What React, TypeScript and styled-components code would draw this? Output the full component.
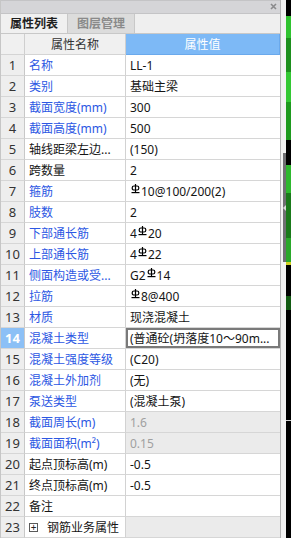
import React from 'react';
import styled, { createGlobalStyle } from 'styled-components';

const GlobalStyle = createGlobalStyle`
    html, body {
        margin: 0;
        padding: 0;
        background: #000;
    }
    body {
        font-family: "Noto Sans", "Noto Sans CJK SC", sans-serif;
    }
`;

const Screen = styled.div`
    display: flex;
    width: 291px;
    height: 538px;
    overflow: hidden;
    background: #000;
`;

const Panel = styled.div`
    display: flex;
    flex-direction: column;
    width: 280px;
    height: 100%;
    background: #f0f0f0;
    border-left: 1px solid #c6c6c6;
    box-sizing: border-box;
    overflow: hidden;
`;

const TitleBar = styled.div`
    display: flex;
    align-items: center;
    justify-content: flex-end;
    height: 15px;
    padding-right: 3px;
    background: #d5d5d8;
    border-top: 1px solid #c4c4c6;
    border-bottom: 1px solid #c4c4c6;
    box-sizing: border-box;
`;

const TabBar = styled.div`
    display: flex;
    height: 23px;
    background: #efefef;
    border-bottom: 1px solid #c8c8c8;
    box-sizing: border-box;
`;

const Tab = styled.div<{ $active?: boolean }>`
    display: flex;
    align-items: center;
    justify-content: center;
    width: 66px;
    font-size: 12px;
    font-weight: bold;
    color: ${(p) => (p.$active ? '#1e1e1e' : '#8a8a8a')};
    background: ${(p) => (p.$active ? '#f0f0f0' : '#dcdcdc')};
    border-right: 1px solid #c8c8c8;
`;

const Grid = styled.div`
    display: grid;
    grid-template-columns: 24px 101px 154px;
    grid-auto-rows: 21px;
`;

const HeadCell = styled.div<{ $accent?: boolean }>`
    display: flex;
    align-items: center;
    justify-content: center;
    font-size: 12px;
    color: ${(p) => (p.$accent ? '#ffffff' : '#333333')};
    background: ${(p) => (p.$accent ? '#7db9f6' : '#f0f0f0')};
    border-right: 1px solid ${(p) => (p.$accent ? '#6aa9ec' : '#cfcfcf')};
    border-bottom: 1px solid ${(p) => (p.$accent ? '#6aa9ec' : '#d4d4d4')};
    box-sizing: border-box;
`;

const NumCell = styled.div<{ $active?: boolean }>`
    display: flex;
    align-items: center;
    justify-content: center;
    font-size: 13px;
    font-weight: ${(p) => (p.$active ? 'bold' : 'normal')};
    color: ${(p) => (p.$active ? '#ffffff' : '#333333')};
    background: ${(p) => (p.$active ? '#8cc0f6' : '#eeeeee')};
    border-right: 1px solid #c8c8c8;
    border-bottom: 1px solid #d6d6d6;
    box-sizing: border-box;
`;

const NameCell = styled.div<{ $blue?: boolean }>`
    display: flex;
    align-items: center;
    gap: 9px;
    padding-left: 4px;
    font-size: 12px;
    white-space: nowrap;
    overflow: hidden;
    color: ${(p) => (p.$blue ? '#2c57e3' : '#151515')};
    background: #ffffff;
    border-right: 1px solid #d2d2d2;
    border-bottom: 1px solid #d6d6d6;
    box-sizing: border-box;
`;

const ValueCell = styled.div<{ $muted?: boolean; $editing?: boolean }>`
    display: flex;
    align-items: center;
    padding-left: 4px;
    font-size: 12px;
    white-space: nowrap;
    overflow: hidden;
    color: ${(p) => (p.$muted ? '#a0a0a0' : '#151515')};
    background: ${(p) => (p.$muted ? '#ebebeb' : '#ffffff')};
    border-bottom: 1px solid #d6d6d6;
    box-shadow: ${(p) => (p.$editing ? 'inset 0 0 0 2px #7a7a7a' : 'none')};
    box-sizing: border-box;
`;

const Expander = styled.span`
    display: flex;
    align-items: center;
    justify-content: center;
    width: 9px;
    height: 9px;
    border: 1px solid #5a5a5a;
    font-size: 10px;
    line-height: 1;
    color: #222;
    box-sizing: border-box;
`;

const Splitter = styled.div`
    display: flex;
    flex-direction: column;
    width: 6px;
    height: 100%;
    background: #f2f2f2;
    border-left: 1px solid #b4b4b4;
    box-sizing: border-box;
    padding-top: 153px;
    align-items: flex-end;
`;

const Handle = styled.div`
    display: flex;
    align-items: center;
    justify-content: center;
    width: 3px;
    height: 109px;
    background: #6f6f72;
`;

const Viewport = styled.svg`
    display: block;
    flex: 1;
    height: 100%;
`;

const Mark = styled.svg`
    display: inline-block;
    width: 9px;
    height: 10px;
    margin: 0 1px;
    position: relative;
    top: -2px;
`;

const RebarMark = () => (
    <Mark viewBox="0 0 9 10">
        <line x1="4.5" y1="0" x2="4.5" y2="8.5" stroke="#000" strokeWidth="1.2" />
        <rect x="1.2" y="2" width="6.6" height="4" rx="1.8" fill="none" stroke="#000" strokeWidth="1.2" />
        <line x1="0.5" y1="8.6" x2="8.5" y2="8.6" stroke="#000" strokeWidth="1.2" />
    </Mark>
);

type Row = {
    name: string;
    value: string;
    blue?: boolean;
    muted?: boolean;
    editing?: boolean;
    group?: boolean;
};

const rows: Row[] = [
    { name: '名称', value: 'LL-1', blue: true },
    { name: '类别', value: '基础主梁', blue: true },
    { name: '截面宽度(mm)', value: '300', blue: true },
    { name: '截面高度(mm)', value: '500', blue: true },
    { name: '轴线距梁左边...', value: '(150)' },
    { name: '跨数量', value: '2' },
    { name: '箍筋', value: '#10@100/200(2)', blue: true },
    { name: '肢数', value: '2', blue: true },
    { name: '下部通长筋', value: '4#20', blue: true },
    { name: '上部通长筋', value: '4#22', blue: true },
    { name: '侧面构造或受...', value: 'G2#14', blue: true },
    { name: '拉筋', value: '#8@400', blue: true },
    { name: '材质', value: '现浇混凝土', blue: true },
    { name: '混凝土类型', value: '(普通砼(坍落度10～90m...', blue: true, editing: true },
    { name: '混凝土强度等级', value: '(C20)', blue: true },
    { name: '混凝土外加剂', value: '(无)', blue: true },
    { name: '泵送类型', value: '(混凝土泵)', blue: true },
    { name: '截面周长(m)', value: '1.6', blue: true, muted: true },
    { name: '截面面积(m²)', value: '0.15', blue: true, muted: true },
    { name: '起点顶标高(m)', value: '-0.5' },
    { name: '终点顶标高(m)', value: '-0.5' },
    { name: '备注', value: '' },
    { name: '钢筋业务属性', value: '', muted: true, group: true },
];

const renderValue = (value: string) => {
    const parts = value.split('#');
    return parts.map((part, i) => (
        <React.Fragment key={i}>
            {i > 0 && <RebarMark />}
            {part}
        </React.Fragment>
    ));
};

const CadStrip = () => (
    <Viewport viewBox="0 0 5 538" preserveAspectRatio="none">
        <rect x="0" y="0" width="5" height="538" fill="#000" />
        <rect x="0" y="16" width="5" height="22" fill="#2fc32f" />
        <rect x="0" y="38" width="5" height="34" fill="#1d8f1d" />
        <rect x="0" y="72" width="5" height="30" fill="#33c833" />
        <rect x="0" y="102" width="5" height="38" fill="#1e9a1e" />
        <rect x="0" y="165" width="5" height="28" fill="#2eb82e" />
        <rect x="0" y="193" width="5" height="45" fill="#1a7a1a" />
        <rect x="0" y="238" width="5" height="24" fill="#2aa82a" />
        <rect x="0" y="262" width="5" height="3" fill="#d0d020" />
        <rect x="0" y="296" width="5" height="14" fill="#125a12" />
        <rect x="0" y="420" width="5" height="1" fill="#cfcfcf" />
    </Viewport>
);

export default function App() {
    return (
        <Screen>
            <GlobalStyle />
            <Panel>
                <TitleBar>
                    <svg width="7" height="7" viewBox="0 0 7 7">
                        <path d="M1 1 L6 6 M6 1 L1 6" stroke="#8a8a8c" strokeWidth="1.6" />
                    </svg>
                </TitleBar>
                <TabBar>
                    <Tab $active>属性列表</Tab>
                    <Tab>图层管理</Tab>
                </TabBar>
                <Grid>
                    <HeadCell />
                    <HeadCell>属性名称</HeadCell>
                    <HeadCell $accent>属性值</HeadCell>
                    {rows.map((row, i) => (
                        <React.Fragment key={i}>
                            <NumCell $active={row.editing}>{i + 1}</NumCell>
                            <NameCell $blue={row.blue}>
                                {row.group && <Expander>+</Expander>}
                                {row.name}
                            </NameCell>
                            <ValueCell $muted={row.muted} $editing={row.editing}>
                                {renderValue(row.value)}
                            </ValueCell>
                        </React.Fragment>
                    ))}
                </Grid>
            </Panel>
            <Splitter>
                <Handle>
                    <svg width="3" height="6" viewBox="0 0 3 6">
                        <path d="M3 0 L0 3 L3 6 Z" fill="#d8d8d8" />
                    </svg>
                </Handle>
            </Splitter>
            <CadStrip />
        </Screen>
    );
}
